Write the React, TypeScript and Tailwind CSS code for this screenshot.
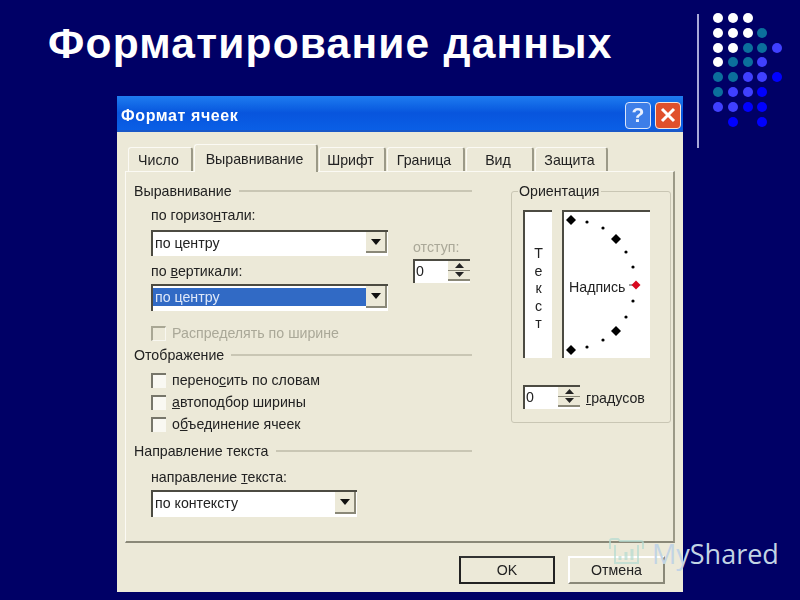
import type { ReactNode } from 'react';

const dots = [
  ['w', 'w', 'w', '', ''],
  ['w', 'w', 'w', 't', ''],
  ['w', 'w', 't', 't', 'b'],
  ['w', 't', 't', 'b', ''],
  ['t', 't', 'b', 'b', 'd'],
  ['t', 'b', 'b', 'd', ''],
  ['b', 'b', 'd', 'd', ''],
  ['', 'd', '', 'd', ''],
];

function Dot({ kind }: { kind: string }) {
  if (kind === 'w') return <div className="w-[10px] h-[10px] rounded-full bg-white" />;
  if (kind === 't') return <div className="w-[10px] h-[10px] rounded-full bg-[#0b6f9c]" />;
  if (kind === 'b') return <div className="w-[10px] h-[10px] rounded-full bg-[#4040ff]" />;
  if (kind === 'd') return <div className="w-[10px] h-[10px] rounded-full bg-[#0000ff]" />;
  return <div className="w-[10px] h-[10px]" />;
}

function Tab({ label, width, active }: { label: string; width: string; active?: boolean }) {
  if (active) {
    return (
      <div className={`${width} h-[28px] -mb-[1px] z-10 flex items-center justify-center pr-[2px] bg-[#ece9d8] border-l border-t border-[#fbfaf4] border-r-2 border-r-[#9b9987] rounded-t-[3px]`}>
        {label}
      </div>
    );
  }
  return (
    <div className={`${width} h-[24px] flex items-center justify-center pr-[3px] pt-[1px] bg-[#ece9d8] border-l border-t border-[#fbfaf4] border-r-2 border-r-[#9b9987] rounded-t-[3px]`}>
      {label}
    </div>
  );
}

function Heading({ label, className }: { label: string; className: string }) {
  return (
    <div className={`flex items-center gap-[7px] h-[16px] ${className}`}>
      <span>{label}</span>
      <div className="flex-1 h-[2px] bg-[#c9c6b4]" />
    </div>
  );
}

function ArrowButton() {
  return (
    <div className="w-[21px] h-full flex items-center justify-center bg-[#ece9d8] border-r-2 border-b-2 border-[#8a8878]">
      <svg width="10" height="6" viewBox="0 0 10 6">
        <path d="M0 0h10L5 6z" fill="#111" />
      </svg>
    </div>
  );
}

function Combo({ value, width, height, selected }: { value: string; width: string; height: string; selected?: boolean }) {
  return (
    <div className={`${width} ${height} flex bg-white border-t-2 border-l-2 border-[#4c4b42] pb-[3px] pr-[1px]`}>
      {selected ? (
        <div className="flex-1 flex pt-[2px] pb-[2px]">
          <div className="flex-1 flex items-center pl-[2px] bg-[#316ac5] text-[#dfe8f8]">{value}</div>
        </div>
      ) : (
        <div className="flex-1 flex items-center pl-[2px]">{value}</div>
      )}
      <ArrowButton />
    </div>
  );
}

function Spin({ width }: { width: string }) {
  return (
    <div className={`${width} h-[24px] flex bg-white border-t-2 border-l-2 border-[#4c4b42] pb-[2px]`}>
      <div className="flex-1 flex items-center pl-[1px]">0</div>
      <div className="w-[22px] flex flex-col">
        <div className="flex-1 flex items-center justify-center bg-[#ece9d8] border-b border-[#8a8878]">
          <svg width="9" height="5" viewBox="0 0 9 5"><path d="M0 5h9L4.5 0z" fill="#222" /></svg>
        </div>
        <div className="flex-1 flex items-center justify-center bg-[#ece9d8] border-b-2 border-[#8a8878]">
          <svg width="9" height="5" viewBox="0 0 9 5"><path d="M0 0h9L4.5 5z" fill="#222" /></svg>
        </div>
      </div>
    </div>
  );
}

function Check({ children, disabled, className }: { children: ReactNode; disabled?: boolean; className: string }) {
  return (
    <div className={`flex items-center gap-[6px] h-[16px] ${className}`}>
      {disabled ? (
        <div className="w-[15px] h-[15px] bg-[#ece9d8] border-t-2 border-l-2 border-[#a9a794] border-r border-b border-r-[#f8f7f0] border-b-[#f8f7f0]" />
      ) : (
        <div className="w-[15px] h-[15px] bg-[#f9f8f2] border-t-2 border-l-2 border-[#77766a]" />
      )}
      <span className={disabled ? 'text-[#aaa898]' : ''}>{children}</span>
    </div>
  );
}

function Diamond({ x, y, red }: { x: number; y: number; red?: boolean }) {
  if (red) {
    return (
      <g>
        <path d={`M${x - 7} ${y}h4`} stroke="#444" strokeWidth="1" />
        <path d={`M${x} ${y - 4.5}L${x + 4.5} ${y}L${x} ${y + 4.5}L${x - 4.5} ${y}z`} fill="#d8091f" />
      </g>
    );
  }
  return <path d={`M${x} ${y - 5}L${x + 5} ${y}L${x} ${y + 5}L${x - 5} ${y}z`} fill="#000" />;
}

export default function App() {
  return (
    <div className="w-[800px] h-[600px] flex bg-[#000066] overflow-hidden relative text-[14.2px] leading-[16px] text-[#222] font-['Liberation_Sans',Arial,sans-serif]">
      {/* Left part: title and dialog */}
      <div className="w-[697px] flex flex-col">
        <div className="h-[96px] pl-[48px] pt-[19px] text-[42.5px] leading-[50px] font-bold text-white tracking-[1.2px]">
          Форматирование данных
        </div>

        <div className="ml-[117px] w-[566px] h-[496px] flex flex-col bg-[#ece9d8] blur-[0.4px]">
          <div className="h-[36px] flex items-center justify-between pt-[4px] pl-[4px] pr-[2px] bg-gradient-to-b from-[#1f7cf0] via-[#0855dd] to-[#0a5fe6] border-b-2 border-[#1a58c8]">
            <span className="mt-[2px] text-white font-bold text-[16px] tracking-[0.6px]">Формат ячеек</span>
            <div className="flex gap-[4px]">
              <div className="w-[26px] h-[27px] flex items-center justify-center rounded-[4px] border border-[#dbe6fa] bg-[#3d7ee8] text-[#e8f0ff] text-[21px] font-bold">?</div>
              <div className="w-[26px] h-[27px] flex items-center justify-center rounded-[4px] border border-[#f4e4dc] bg-[#e0502c]">
                <svg width="16" height="16" viewBox="0 0 16 16">
                  <path d="M2 2l12 12M14 2L2 14" stroke="#fff" strokeWidth="3" />
                </svg>
              </div>
            </div>
          </div>

          <div className="flex-1 flex flex-col px-[8px]">
            <div className="h-[39px] flex items-end pl-[3px] gap-[1px]">
              <Tab label="Число" width="w-[65px]" />
              <Tab label="Выравнивание" width="w-[124px]" active />
              <Tab label="Шрифт" width="w-[67px]" />
              <Tab label="Граница" width="w-[78px]" />
              <Tab label="Вид" width="w-[68px]" />
              <Tab label="Защита" width="w-[73px]" />
            </div>

            <div className="h-[372px] flex border-l border-t border-[#fbfaf4] border-r-2 border-b-2 border-r-[#9b9987] border-b-[#8a8878] pl-[8px] pt-[11px]">
              {/* Left column */}
              <div className="w-[338px] flex flex-col">
                <Heading label="Выравнивание" className="" />
                <div className="flex ml-[17px] mt-[8px]">
                  <div className="w-[237px] flex flex-col">
                    <div>по горизо<u>н</u>тали:</div>
                    <div className="mt-[7px]">
                      <Combo value="по центру" width="w-[237px]" height="h-[26px]" />
                    </div>
                    <div className="mt-[7px]">по <u>в</u>ертикали:</div>
                    <div className="mt-[5px]">
                      <Combo value="по центру" width="w-[237px]" height="h-[27px]" selected />
                    </div>
                  </div>
                  <div className="ml-[25px] pt-[32px]">
                    <div className="text-[#aaa898]">отступ:</div>
                    <div className="mt-[4px]">
                      <Spin width="w-[57px]" />
                    </div>
                  </div>
                </div>
                <Check disabled className="ml-[17px] mt-[14px]">Распределять по ширине</Check>
                <Heading label="Отображение" className="mt-[6px]" />
                <Check className="ml-[17px] mt-[9px]">перено<u>с</u>ить по словам</Check>
                <Check className="ml-[17px] mt-[6px]"><u>а</u>втоподбор ширины</Check>
                <Check className="ml-[17px] mt-[6px]">о<u>б</u>ъединение ячеек</Check>
                <Heading label="Направление текста" className="mt-[11px]" />
                <div className="ml-[17px] mt-[10px]">направление <u>т</u>екста:</div>
                <div className="ml-[17px] mt-[5px]">
                  <Combo value="по контексту" width="w-[206px]" height="h-[27px]" />
                </div>
              </div>

              {/* Orientation group */}
              <fieldset className="ml-[39px] w-[160px] h-[240px] border border-[#c9c6b4] rounded-[3px] pl-[11px] flex flex-col">
                <legend className="-ml-[5px] px-[1px]">Ориентация</legend>
                <div className="flex mt-[11px]">
                  <div className="w-[29px] h-[148px] flex flex-col items-center pt-[33px] bg-white border-t-2 border-l-2 border-[#4c4b42] leading-[17.5px]">
                    <span>Т</span>
                    <span>е</span>
                    <span>к</span>
                    <span>с</span>
                    <span>т</span>
                  </div>
                  <div className="ml-[10px] w-[88px] h-[148px] relative flex items-center pl-[5px] bg-white border-t-2 border-l-2 border-[#4c4b42]">
                    <span className="mt-[3px]">Надпись</span>
                    <svg className="absolute -left-[2px] -top-[1px]" width="88" height="148" viewBox="0 0 88 148">
                      <Diamond x={9} y={9} />
                      <Diamond x={54} y={28} />
                      <Diamond x={74} y={74} red />
                      <Diamond x={54} y={120} />
                      <Diamond x={9} y={139} />
                      <circle cx="25" cy="11" r="1.6" fill="#000" />
                      <circle cx="41" cy="17" r="1.6" fill="#000" />
                      <circle cx="64" cy="41" r="1.6" fill="#000" />
                      <circle cx="71" cy="56" r="1.6" fill="#000" />
                      <circle cx="71" cy="90" r="1.6" fill="#000" />
                      <circle cx="64" cy="106" r="1.6" fill="#000" />
                      <circle cx="41" cy="129" r="1.6" fill="#000" />
                      <circle cx="25" cy="136" r="1.6" fill="#000" />
                    </svg>
                  </div>
                </div>
                <div className="flex items-center mt-[27px]">
                  <Spin width="w-[57px]" />
                  <span className="ml-[6px] mt-[1px]"><u>г</u>радусов</span>
                </div>
              </fieldset>
            </div>

            <div className="flex justify-end gap-[13px] mt-[13px] pr-[10px]">
              <div className="w-[96px] h-[28px] flex items-center justify-center border-2 border-[#222] border-t-[#333] bg-[#ece9d8]">OK</div>
              <div className="w-[97px] h-[28px] flex items-center justify-center bg-[#ece9d8] border-t-2 border-l-2 border-white border-r-2 border-b-2 border-r-[#8a8878] border-b-[#8a8878]">Отмена</div>
            </div>
          </div>
        </div>
      </div>

      {/* Right part: rule and dots */}
      <div className="flex items-start">
        <div className="w-[2px] h-[134px] mt-[14px] bg-[#a8a8d8]" />
        <div className="ml-[14px] mt-[13px] flex flex-col gap-[4.8px]">
          {dots.map((row, r) => (
            <div key={r} className="flex gap-[4.8px]">
              {row.map((kind, c) => (
                <Dot key={c} kind={kind} />
              ))}
            </div>
          ))}
        </div>
      </div>

      {/* Watermark */}
      <div className="absolute left-[609px] top-[536px] flex items-start gap-[8px] text-[#c2d4e4]">
        <svg className="mt-[1px]" width="35" height="27" viewBox="0 0 35 27" fill="none" opacity="0.7">
          <path d="M1 12V4q0-2 2-2h6l2 2h21q2 0 2 2v6" stroke="#b4dcd2" strokeWidth="2" />
          <path d="M6 8v18h23V8" stroke="#b4dcd2" strokeWidth="2" />
          <path d="M11 23v-4M17 23v-8M23 23v-11" stroke="#b4dcd2" strokeWidth="3" />
        </svg>
        <span className="text-[27px] leading-[36px] font-['Open_Sans',sans-serif]">MyShared</span>
      </div>
    </div>
  );
}
